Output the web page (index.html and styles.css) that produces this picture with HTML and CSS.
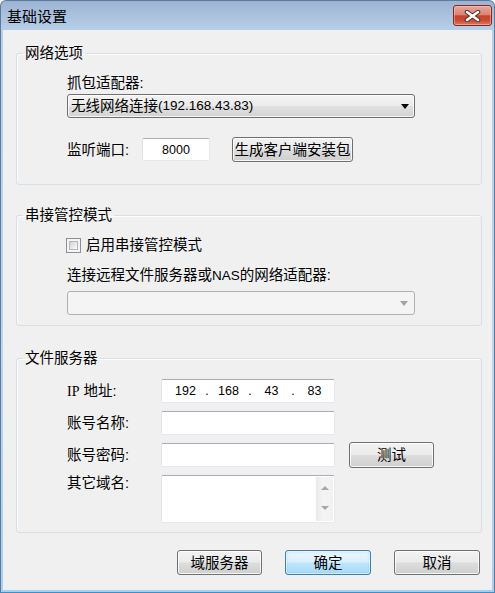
FILE: index.html
```html
<!DOCTYPE html>
<html lang="zh-CN">
<head>
<meta charset="utf-8">
<title>基础设置</title>
<link rel="stylesheet" href="styles.css">
</head>
<body>
<div class="window">
  <div class="titlebar">
    <span class="title">基础设置</span>
    <div class="close">
      <svg width="17" height="12" viewBox="0 0 17 12">
        <path d="M3 2 L14 10 M14 2 L3 10" stroke="#5a2b26" stroke-width="4.6" stroke-linecap="round" fill="none"/>
        <path d="M3 2 L14 10 M14 2 L3 10" stroke="#ffffff" stroke-width="2.6" stroke-linecap="round" fill="none"/>
      </svg>
    </div>
  </div>
  <div class="client">
    <fieldset class="group g1">
      <legend>网络选项</legend>
      <div class="body">
        <div class="label">抓包适配器:</div>
        <div class="combo">无线网络连接<span class="lat">(192.168.43.83)</span><span class="arrow"></span></div>
        <div class="port-row">
          <span class="label port-label">监听端口:</span>
          <div class="input port"><span class="lat small">8000</span></div>
          <div class="btn gen">生成客户端安装包</div>
        </div>
      </div>
    </fieldset>

    <fieldset class="group g2">
      <legend>串接管控模式</legend>
      <div class="body">
        <div class="check-row">
          <span class="checkbox"><span class="check-inner"></span></span>
          <span class="label">启用串接管控模式</span>
        </div>
        <div class="label nas-label">连接远程文件服务器或<span class="lat">NAS</span>的网络适配器:</div>
        <div class="combo disabled"><span class="arrow"></span></div>
      </div>
    </fieldset>

    <fieldset class="group g3">
      <legend>文件服务器</legend>
      <div class="body">
        <div class="form-row first">
          <span class="label fl"><span class="serif">IP</span> 地址:</span>
          <div class="input field ip">
            <span class="oct">192</span><span class="dot">.</span><span class="oct">168</span><span class="dot">.</span><span class="oct">43</span><span class="dot">.</span><span class="oct">83</span>
          </div>
        </div>
        <div class="form-row">
          <span class="label fl">账号名称:</span>
          <div class="input field"></div>
        </div>
        <div class="form-row">
          <span class="label fl">账号密码:</span>
          <div class="input field"></div>
          <div class="btn test">测试</div>
        </div>
        <div class="form-row tall">
          <span class="label fl top">其它域名:</span>
          <div class="input field area">
            <div class="area-text"></div>
            <div class="scrollbar">
              <span class="sarrow up"></span>
              <span class="sarrow down"></span>
            </div>
          </div>
        </div>
      </div>
    </fieldset>

    <div class="actions">
      <div class="btn action">域服务器</div>
      <div class="btn action default">确定</div>
      <div class="btn action">取消</div>
    </div>
  </div>
</div>
</body>
</html>
```

FILE: styles.css
```css
* { box-sizing: border-box; }
html, body { margin: 0; padding: 0; }
body {
  width: 495px;
  height: 593px;
  overflow: hidden;
  font-family: "Liberation Sans", "Noto Sans CJK SC", sans-serif;
  font-size: 14.5px;
  color: #000;
  background: #ffffff;
}

.window {
  width: 495px;
  height: 593px;
  border: 1px solid #5b7a9e;
  border-bottom-color: #3b8fcb;
  border-radius: 6px 6px 0 0;
  background: linear-gradient(#9cb4d2 0px, #b8cfe8 29px, #bfd5ec 60%, #a9cfee 100%);
  display: flex;
  flex-direction: column;
}

.titlebar {
  height: 29px;
  display: flex;
  justify-content: space-between;
  align-items: flex-start;
}
.title {
  padding-left: 6px;
  line-height: 29px;
  font-size: 15px;
  font-family: "Noto Sans CJK SC", sans-serif;
  color: #000;
}
.close {
  width: 39px;
  height: 21px;
  margin: 4px 2px 0 0;
  border: 1px solid #83261d;
  border-radius: 3px;
  background: linear-gradient(#e7a89d 0%, #d98475 45%, #c5432c 52%, #c94a33 75%, #dc7a62 100%);
  box-shadow: inset 0 0 0 1px rgba(255, 210, 200, 0.45);
  display: flex;
  align-items: center;
  justify-content: center;
}

.client {
  flex: 1;
  margin: 0 2px 2px 2px;
  background: #f0f0f0;
  display: flex;
  flex-direction: column;
}

.group {
  margin: 0 10px 0 13px;
  padding: 0;
  min-width: 0;
  border: 1px solid #d5dfe5;
  border-radius: 3px;
  box-shadow: inset 1px 1px 0 #fbfcfd;
}
.group legend {
  margin-left: 6px;
  padding: 0 2px;
  line-height: 16px;
  font-size: 14.5px;
}
.g1 { margin-top: 15px; }
.g2 { margin-top: 22px; }
.g3 { margin-top: 24px; }

.g1 .body { padding: 14px 0 22px 50px; }
.g2 .body { padding: 14px 0 10px 50px; }
.g3 .body { padding: 13px 0 9px 50px; }

.label { line-height: 16px; white-space: nowrap; }
.lat { font-family: "Liberation Sans", sans-serif; font-size: 13.5px; }
.small { font-size: 12.5px; }
.serif { font-family: "Liberation Serif", serif; font-size: 14px; }

.combo {
  width: 348px;
  height: 24px;
  margin-top: 3px;
  border: 1px solid #707070;
  border-radius: 3px;
  background: linear-gradient(#f3f3f3 0%, #ececec 48%, #e0e0e0 52%, #d3d3d3 100%);
  box-shadow: inset 0 0 0 1px rgba(255, 255, 255, 0.75);
  display: flex;
  align-items: center;
  padding: 0 5px 0 3px;
  white-space: nowrap;
  line-height: 16px;
}
.arrow {
  margin-left: auto;
  width: 0;
  height: 0;
  border-left: 4.5px solid transparent;
  border-right: 4.5px solid transparent;
  border-top: 5px solid #000;
}
.combo.disabled {
  margin-top: 7px;
  border-color: #adb2b5;
  background: #f4f4f4;
  box-shadow: none;
  padding-right: 6px;
}
.combo.disabled .arrow { border-top-color: #a2a2a2; }

.port-row {
  margin-top: 19px;
  height: 25px;
  display: flex;
  align-items: center;
}
.port-label { width: 75px; }

.input {
  background: #ffffff;
  border: 1px solid;
  border-color: #abadb3 #e3e9ef #e3e9ef #e2e3ea;
  border-radius: 2px;
}
.port {
  width: 68px;
  height: 23px;
  display: flex;
  align-items: center;
  justify-content: center;
}

.btn {
  border: 1px solid #707070;
  border-radius: 3px;
  background: linear-gradient(#f2f2f2 0%, #ebebeb 48%, #dddddd 52%, #cfcfcf 100%);
  box-shadow: inset 0 0 0 1px rgba(255, 255, 255, 0.8);
  display: flex;
  align-items: center;
  justify-content: center;
  line-height: 16px;
  white-space: nowrap;
}
.gen {
  width: 121px;
  height: 25px;
  margin-left: 22px;
}

.check-row {
  height: 16px;
  display: flex;
  align-items: center;
}
.checkbox {
  width: 15px;
  height: 15px;
  margin-left: -1px;
  margin-right: 5px;
  border: 1px solid #8f8f8f;
  background: #f4f4f4;
  padding: 2px;
  display: flex;
}
.check-inner {
  flex: 1;
  border: 1px solid #b4b7bb;
  background: linear-gradient(135deg, #cfd2d6 0%, #e6e7e9 50%, #fbfbfb 100%);
}
.nas-label { margin-top: 14px; }

.form-row {
  height: 24px;
  margin-top: 8px;
  display: flex;
  align-items: center;
}
.form-row.first { margin-top: 0; }
.form-row.tall { height: 48px; align-items: flex-start; }
.fl { width: 94px; }
.fl.top { margin-top: 0; }
.field {
  width: 174px;
  height: 24px;
}
.ip {
  display: flex;
  align-items: center;
  padding-left: 7px;
  font-size: 12.5px;
}
.oct { width: 33px; text-align: center; }
.dot { width: 10px; text-align: center; }

.test {
  width: 85px;
  height: 26px;
  margin-left: 14px;
}

.area {
  height: 48px;
  display: flex;
  padding: 1px;
}
.area-text { flex: 1; }
.scrollbar {
  width: 18px;
  background: linear-gradient(to right, #eaeaea, #f4f4f4 40%, #f1f1f1);
  border-left: 1px solid #fdfdfd;
  display: flex;
  flex-direction: column;
  justify-content: space-between;
  align-items: center;
  padding: 9px 0 11px;
}
.sarrow {
  width: 0;
  height: 0;
  border-left: 4px solid transparent;
  border-right: 4px solid transparent;
}
.sarrow.up { border-bottom: 4px solid #a6a6a6; }
.sarrow.down { border-top: 4px solid #a6a6a6; }

.actions {
  margin-top: 17px;
  padding-left: 174px;
  display: flex;
  gap: 23px;
}
.action {
  width: 86px;
  height: 25px;
}
.action:first-child { width: 85px; }
.default {
  border-color: #3c7fb1;
  background: linear-gradient(#eaf6fd 0%, #d9f0fc 48%, #bee6fd 52%, #a7d9f5 100%);
  box-shadow: inset 0 0 0 1px rgba(255, 255, 255, 0.6), inset 0 0 2px 1px rgba(80, 180, 235, 0.35);
}
```
